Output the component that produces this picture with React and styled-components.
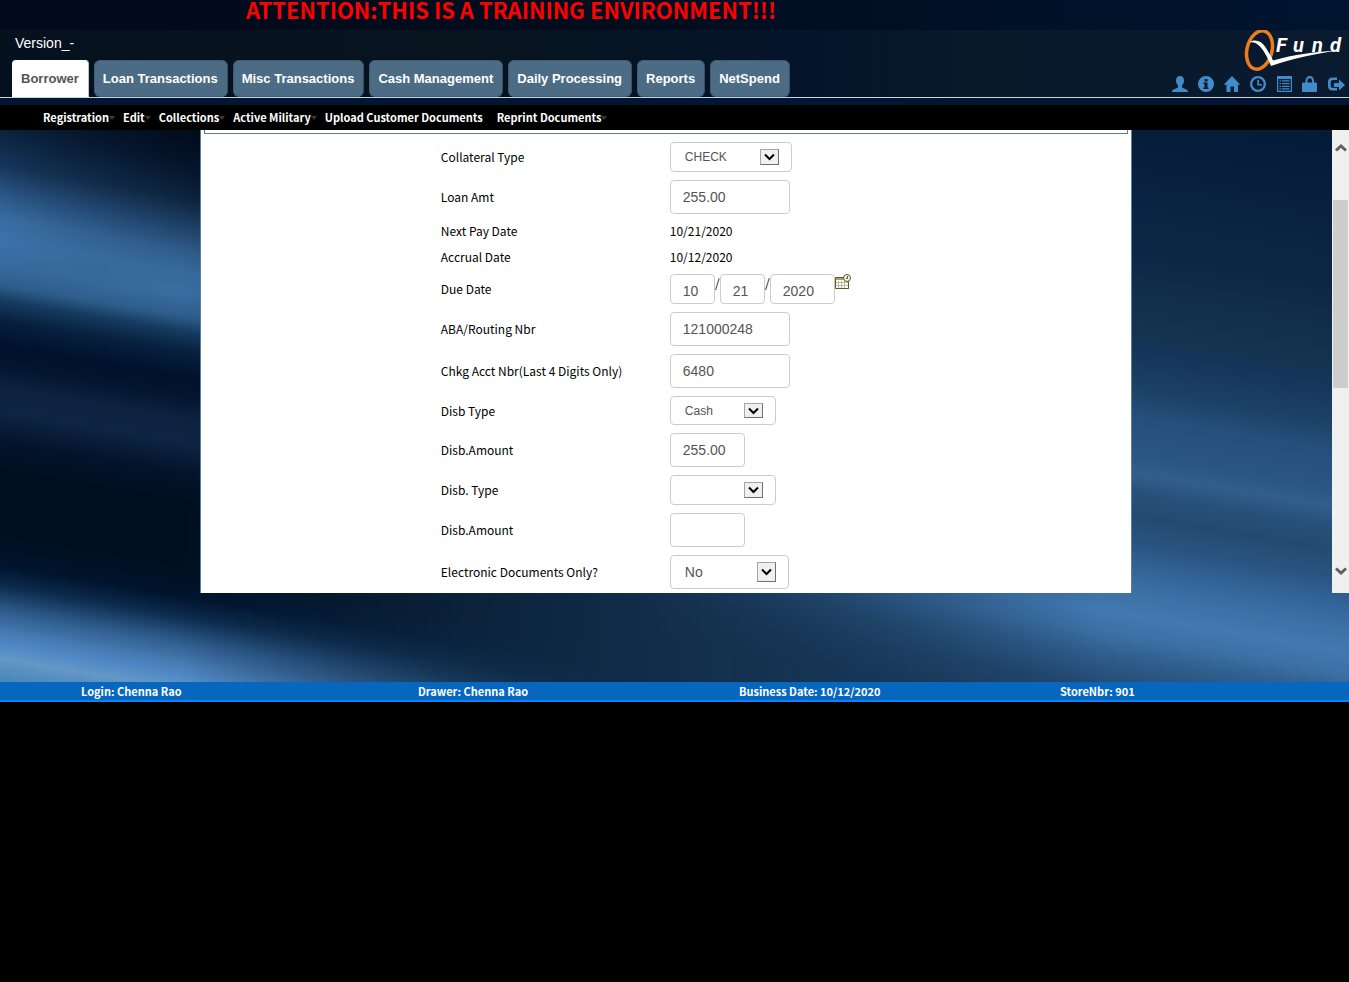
import React from 'react';
import styled, { createGlobalStyle } from 'styled-components';

const sourceSans = '"Noto Sans CJK SC", "Noto Sans", sans-serif';
const arial = '"Liberation Sans", Arial, sans-serif';

const GlobalStyle = createGlobalStyle`
  *, *::before, *::after { box-sizing: border-box; }
  body { margin: 0; background: #000; font-family: ${sourceSans}; font-size: 12px; color: #000; }
`;

const Shell = styled.div`
  position: relative;
  isolation: isolate;
`;

const BackdropSvg = styled.svg`
  position: absolute;
  inset: 0;
  width: 100%;
  height: 100%;
  z-index: -1;
`;

const Banner = styled.div`
  height: 30px;
  padding-left: 246px;
  background: linear-gradient(90deg, #010a1a, #020c1c 40%, #001430);
  color: #f00;
  font-size: 22px;
  font-weight: 700;
  line-height: 18px;
  white-space: nowrap;
`;

const Header = styled.header`
  display: flex;
  justify-content: space-between;
  background: linear-gradient(90deg, #06111f, #07131d 35%, #04142b 60%, #08192a 72%, #0a1a2f);
  border-bottom: 1px solid #ccd3dc;
`;

const HeaderLeft = styled.div`
  padding-left: 12px;
`;

const Version = styled.div`
  height: 30px;
  padding: 5px 3px;
  color: #fff;
  font: 14px/16px ${arial};
`;

const Tabs = styled.nav`
  display: flex;
  gap: 5px;
`;

const Tab = styled.a`
  height: 37px;
  padding: 0 9px 0 8px;
  border: 1px solid ${(p) => (p.$active ? '#fff' : '#3f5c75')};
  border-right-color: ${(p) => (p.$active ? '#b9c3cd' : '#35506a')};
  border-radius: ${(p) => (p.$active ? '4px 4px 0 0' : '6px')};
  background: ${(p) => (p.$active ? '#fff' : '#4c6b85')};
  color: ${(p) => (p.$active ? '#555' : '#fff')};
  font: bold 13px/35px ${arial};
  text-decoration: none;
  white-space: nowrap;
`;

const HeaderRight = styled.div`
  display: flex;
  flex-direction: column;
  align-items: flex-end;
`;

const Tools = styled.div`
  display: flex;
  gap: 10px;
  padding: 5px 5px 0 0;
`;

const ToolButton = styled.button`
  display: block;
  padding: 0;
  border: 0;
  background: none;
  line-height: 0;
  color: #428bca;
`;

const MenuBar = styled.nav`
  display: flex;
  gap: 14px;
  margin-top: 7px;
  padding-left: 43px;
  background: #000;
`;

const MenuLink = styled.a`
  position: relative;
  color: #fff;
  font-size: 11px;
  font-weight: 700;
  line-height: 25px;
  text-decoration: none;
  white-space: nowrap;

  &::after {
    content: '';
    display: ${(p) => (p.$plain ? 'none' : 'block')};
    position: absolute;
    left: 100%;
    top: 11px;
    border: 3px solid transparent;
    border-top: 4px solid #3a3a3a;
    border-bottom: 0;
  }
`;

const Body = styled.div`
  display: flex;
`;

const Main = styled.main`
  flex: 1;
`;

const Panel = styled.div`
  width: 70%;
  margin: 0 auto;
  padding: 0 3px;
  border: solid #5b7f9f;
  border-width: 0 1px;
  background: #fff;
`;

const FrameEdge = styled.div`
  height: 4px;
  border: 1px solid #5b7f9f;
  border-top: 0;
`;

const Form = styled.form`
  padding: 4px 0 0 237px;
`;

const Row = styled.div`
  display: flex;
  align-items: center;
  min-height: 26px;
  padding: 4px 0;
`;

const Label = styled.label`
  width: 229px;
  line-height: 18px;
`;

const Value = styled.output`
  line-height: 18px;
`;

const TextBox = styled.input`
  width: ${(p) => p.$width}px;
  height: 34px;
  padding: 0 12px;
  border: 1px solid #ccc;
  border-radius: 4px;
  background: #fff;
  color: #555;
  font: 14px ${arial};
`;

const DateBox = styled(TextBox)`
  height: 30px;
  padding-top: 4px;
`;

const DateGroup = styled.div`
  display: flex;
  align-items: flex-start;
`;

const Slash = styled.span`
  width: 5px;
  line-height: 18px;
  text-align: center;
`;

const SelectWrap = styled.div`
  position: relative;
  width: ${(p) => p.$width}px;
  height: ${(p) => p.$height}px;
`;

const Select = styled.select`
  appearance: none;
  width: 100%;
  height: 100%;
  padding: 0 14px;
  border: 1px solid #ccc;
  border-radius: 4px;
  background: #fff;
  color: #555;
  font: ${(p) => p.$size}px ${arial};
`;

const SelectArrow = styled.span`
  position: absolute;
  inset: 7px 13px 7px auto;
  display: flex;
  align-items: center;
  justify-content: center;
  width: 19px;
  border: 1px solid #a5a5a5;
  border-right-color: #707070;
  border-bottom-color: #707070;
  background: #f0f0f0;
  pointer-events: none;
`;

const ScrollBar = styled.div`
  display: flex;
  flex-direction: column;
  width: 17px;
  background: #f0f0f0;
`;

const ScrollButton = styled.button`
  display: flex;
  align-items: center;
  justify-content: center;
  height: ${(p) => p.$height}px;
  padding: 0;
  border: 0;
  background: none;
`;

const ScrollTrack = styled.div`
  flex: 1;
  display: grid;
  grid-template-rows: 34fr 188fr 161fr;
  padding: 0 1px;
`;

const ScrollThumb = styled.div`
  grid-row: 2;
  background: #cdcdcd;
`;

const Footer = styled.footer`
  display: grid;
  grid-template-columns: 337fr 321fr 321fr 289fr;
  margin-top: 89px;
  padding-left: 6%;
  border-bottom: 2px solid #0a84fb;
  background: #0767bf;
  color: #fff;
  font-size: 11px;
  font-weight: 700;
  line-height: 18px;
`;

const Stops = ({ list }) => list.map(([y, c]) => <stop key={y} offset={y / 800} stopColor={c} />);

const LEFT = [
  [90, '#030f20'], [130, '#0b2340'], [165, '#17365a'], [195, '#2c5888'], [218, '#3a6da2'], [240, '#3d73aa'],
  [265, '#396b9f'], [285, '#2e5d8b'], [300, '#163b60'], [320, '#07203f'], [346, '#00112b'], [365, '#03152f'],
  [388, '#0d2340'], [412, '#0e2443'], [440, '#04142c'], [470, '#000f20'], [535, '#00101f'], [565, '#00142e'],
  [585, '#0c2a4c'], [609, '#2d5988'], [632, '#477bb3'], [645, '#5089c6'], [658, '#6397c5'], [680, '#4a86bd'], [710, '#5a8fc6'],
];

const RIGHT = [
  [90, '#041b38'], [130, '#051d3a'], [200, '#0b2342'], [250, '#0c2745'], [300, '#122f4c'], [330, '#14334f'],
  [350, '#15355b'], [390, '#1d4267'], [416, '#264f7c'], [455, '#2a5781'], [472, '#315f8a'], [492, '#27507a'],
  [515, '#254a70'], [545, '#2a5582'], [570, '#34659a'], [590, '#3c70a5'], [615, '#4279b1'], [635, '#3d71a7'],
  [660, '#2f5d8b'], [690, '#244a72'], [720, '#1d4165'],
];

function Backdrop() {
  return (
    <BackdropSvg viewBox="0 0 1349 702" preserveAspectRatio="none" aria-hidden="true">
      <defs>
        <linearGradient id="left" gradientUnits="userSpaceOnUse" x1="0" y1="0" x2="0" y2="800"><Stops list={LEFT} /></linearGradient>
        <linearGradient id="right" gradientUnits="userSpaceOnUse" x1="0" y1="0" x2="0" y2="800"><Stops list={RIGHT} /></linearGradient>
        <linearGradient id="fadeOut" gradientUnits="userSpaceOnUse" x1="180" y1="0" x2="620" y2="0">
          <stop offset="0" stopColor="#fff" /><stop offset="1" stopColor="#000" />
        </linearGradient>
        <linearGradient id="fadeIn" gradientUnits="userSpaceOnUse" x1="620" y1="0" x2="1100" y2="0">
          <stop offset="0" stopColor="#000" /><stop offset="1" stopColor="#fff" />
        </linearGradient>
        <linearGradient id="shade" gradientUnits="userSpaceOnUse" x1="0" y1="130" x2="0" y2="290">
          <stop offset="0" stopColor="#000a18" stopOpacity=".85" /><stop offset="1" stopColor="#000a18" stopOpacity="0" />
        </linearGradient>
        <linearGradient id="shadeX" x1="0" y1="0" x2="1" y2="0">
          <stop offset="0" stopColor="#000" /><stop offset="1" stopColor="#fff" />
        </linearGradient>
        <mask id="leftMask"><rect width="1349" height="702" fill="url(#fadeOut)" /></mask>
        <mask id="rightMask"><rect width="1349" height="702" fill="url(#fadeIn)" /></mask>
        <mask id="shadeMask"><rect width="220" height="702" fill="url(#shadeX)" /></mask>
      </defs>
      <rect width="1349" height="702" fill="#112c48" />
      <g mask="url(#leftMask)">
        <rect y="-300" width="1349" height="1200" fill="url(#left)" transform="matrix(1 .17 0 1 0 0)" />
      </g>
      <g mask="url(#rightMask)">
        <rect y="-300" width="1349" height="1300" fill="url(#right)" transform="matrix(1 .17 0 1 0 -192)" />
      </g>
      <rect width="220" height="300" fill="url(#shade)" mask="url(#shadeMask)" />
      <rect width="1349" height="110" fill="#021633" />
    </BackdropSvg>
  );
}

function Logo() {
  return (
    <svg width="106" height="41" viewBox="1243 30 106 41" role="img" aria-label="QFund">
      <ellipse cx="1259.500" cy="50" rx="12.500" ry="19.500" fill="none" stroke="#ee7c1b" strokeWidth="3.500" transform="rotate(14 1259.500 50)" />
      <path fill="#fff" d="M1249 42.500c6-4 12-1.500 16 4 3 4.500 6 9.500 8 14 20-6 44-9 64-10-20 3-44 8-66 15.500-3-8-6.500-14.500-11-19.500-3.500-3.500-6.500-5-11-4z" />
      <text x="1276 1293 1312 1330" y="52" fill="#fff" fontFamily="Roboto, sans-serif" fontSize="20" fontWeight="700" fontStyle="italic">Fund</text>
    </svg>
  );
}

const ICONS = {
  Profile: <path d="M8 0c2.600 0 4 1.800 4 4.500 0 2-.8 3.700-2 4.700v1.500c0 .8.5 1.100 1.500 1.500 2.500.9 4.300 1.500 4.500 3.800H0c.2-2.300 2-2.900 4.500-3.800 1-.4 1.500-.7 1.500-1.500V9.200c-1.200-1-2-2.700-2-4.700C4 1.800 5.400 0 8 0z" />,
  Information: <path fillRule="evenodd" d="M8 0a8 8 0 1 1 0 16A8 8 0 0 1 8 0zM6.500 3v2.500h3V3zM5.500 6.500V8h1v3.500h-1V13h5v-1.500h-1v-5z" />,
  Home: <path d="M8 0l8.300 8.800H14V16h-4v-5.500H6.500V16h-4V8.800H-.3L8 0z" />,
  History: <path fillRule="evenodd" d="M8 0a8 8 0 1 1 0 16A8 8 0 0 1 8 0zM8 2.300a5.700 5.700 0 1 0 0 11.400A5.700 5.700 0 0 0 8 2.300zM7.300 4h1.700v4h3v1.500H7.300z" />,
  Reports: <path fillRule="evenodd" d="M1 0h15v16H1zM2.200 3v11.800h12.600V3zM3.500 4.300H5v1.300H3.500zM6 4.300h7.500v1.300H6zM3.500 7H5v1.300H3.500zM6 7h7.500v1.300H6zM3.500 9.700H5V11H3.500zM6 9.700h7.500V11H6zM3.500 12.300H5v1.300H3.500zM6 12.300h7.500v1.300H6z" />,
  Lock: <path fillRule="evenodd" d="M3.500 6.500V5c0-3 1.500-5 4.300-5S12 2 12 5v1.500h2q1 0 1 1V15q0 1-1 1H1q-1 0-1-1V7.500q0-1 1-1zM5.500 6.500h4.600V5c0-1.700-.8-2.800-2.300-2.800S5.500 3.300 5.500 5z" />,
  Logout: <path d="M9 1.500H4.500Q0 1.500 0 6v4q0 4.500 4.500 4.500H9V12H5Q2.700 12 2.700 9.700V6.300Q2.700 4 5 4h4zM11 3.500V7H6v4h5v3.500L17 9z" />,
};

const TABS = ['Borrower', 'Loan Transactions', 'Misc Transactions', 'Cash Management', 'Daily Processing', 'Reports', 'NetSpend'];
const MENU = ['Registration', 'Edit', 'Collections', 'Active Military', 'Upload Customer Documents', 'Reprint Documents'];

function Field({ id, label, children }) {
  return (
    <Row>
      <Label htmlFor={id}>{label}</Label>
      {children}
    </Row>
  );
}

function TextField({ id, label, value, width = 120 }) {
  return (
    <Field id={id} label={label}>
      <TextBox id={id} type="text" defaultValue={value} $width={width} />
    </Field>
  );
}

function SelectField({ id, label, value, width, height = 30, size = 12 }) {
  return (
    <Field id={id} label={label}>
      <SelectWrap $width={width} $height={height}>
        <Select id={id} $size={size}>
          <option>{value}</option>
        </Select>
        <SelectArrow>
          <svg width="11" height="8" viewBox="0 0 11 8">
            <path d="M1 1.500L5.500 6 10 1.500" fill="none" stroke="#000" strokeWidth="2" />
          </svg>
        </SelectArrow>
      </SelectWrap>
    </Field>
  );
}

function CalendarIcon() {
  return (
    <svg width="16" height="16" viewBox="0 0 16 16">
      <path d="M.5 3.500h13v11H.5z" fill="#fff" stroke="#5c5b2c" />
      <path d="M1 4h12v2H1z" fill="#a5a46c" />
      <path d="M3.500 7v7M6.500 7v7M9.500 7v7M1 8.500h12M1 11.500h12" stroke="#bdbc98" />
      <path d="M.5 14.500h13v-6" fill="none" stroke="#5c5b2c" />
      <circle cx="12" cy="4" r="3.500" fill="#f4f3df" stroke="#5c5b2c" />
      <path d="M12.500 2v2.500H11" fill="none" stroke="#5c5b2c" />
    </svg>
  );
}

function ScrollArrow({ d }) {
  return (
    <svg width="12" height="8" viewBox="0 0 12 8">
      <path d={d} fill="none" stroke="#606060" strokeWidth="3" />
    </svg>
  );
}

export default function App() {
  return (
    <>
      <GlobalStyle />
      <Shell>
        <Backdrop />
        <Banner>ATTENTION:THIS IS A TRAINING ENVIRONMENT!!!</Banner>
        <Header>
          <HeaderLeft>
            <Version>Version_-</Version>
            <Tabs>
              {TABS.map((name, i) => (
                <Tab key={name} href="#" $active={i === 0}>{name}</Tab>
              ))}
            </Tabs>
          </HeaderLeft>
          <HeaderRight>
            <Logo />
            <Tools>
              {Object.entries(ICONS).map(([name, shape]) => (
                <ToolButton key={name} type="button" aria-label={name}>
                  <svg width="16" height="16" viewBox="0 0 16 16" fill="currentColor" overflow="visible">{shape}</svg>
                </ToolButton>
              ))}
            </Tools>
          </HeaderRight>
        </Header>
        <MenuBar>
          {MENU.map((name) => (
            <MenuLink key={name} href="#" $plain={name.startsWith('Upload')}>{name}</MenuLink>
          ))}
        </MenuBar>
        <Body>
          <Main>
            <Panel>
              <FrameEdge />
              <Form>
                <SelectField id="collateral" label="Collateral Type" value="CHECK" width={122} />
                <TextField id="loanAmt" label="Loan Amt" value="255.00" />
                <Field id="nextPay" label="Next Pay Date"><Value id="nextPay">10/21/2020</Value></Field>
                <Field id="accrual" label="Accrual Date"><Value id="accrual">10/12/2020</Value></Field>
                <Field id="dueMonth" label="Due Date">
                  <DateGroup>
                    <DateBox id="dueMonth" type="text" defaultValue="10" $width={45} />
                    <Slash>/</Slash>
                    <DateBox aria-label="Due day" type="text" defaultValue="21" $width={45} />
                    <Slash>/</Slash>
                    <DateBox aria-label="Due year" type="text" defaultValue="2020" $width={65} />
                    <ToolButton type="button" aria-label="Pick a date"><CalendarIcon /></ToolButton>
                  </DateGroup>
                </Field>
                <TextField id="aba" label="ABA/Routing Nbr" value="121000248" />
                <TextField id="acct" label="Chkg Acct Nbr(Last 4 Digits Only)" value="6480" />
                <SelectField id="disbType1" label="Disb Type" value="Cash" width={106} height={29} />
                <TextField id="disbAmt1" label="Disb.Amount" value="255.00" width={75} />
                <SelectField id="disbType2" label="Disb. Type" value="" width={106} />
                <TextField id="disbAmt2" label="Disb.Amount" value="" width={75} />
                <SelectField id="edocs" label="Electronic Documents Only?" value="No" width={119} height={34} size={14} />
              </Form>
            </Panel>
          </Main>
          <ScrollBar>
            <ScrollButton type="button" aria-label="Scroll up" $height={36}><ScrollArrow d="M1 6.500L6 2l5 4.500" /></ScrollButton>
            <ScrollTrack><ScrollThumb /></ScrollTrack>
            <ScrollButton type="button" aria-label="Scroll down" $height={44}><ScrollArrow d="M1 1.500L6 6l5-4.500" /></ScrollButton>
          </ScrollBar>
        </Body>
        <Footer>
          <span>Login: Chenna Rao</span>
          <span>Drawer: Chenna Rao</span>
          <span>Business Date: 10/12/2020</span>
          <span>StoreNbr: 901</span>
        </Footer>
      </Shell>
    </>
  );
}
